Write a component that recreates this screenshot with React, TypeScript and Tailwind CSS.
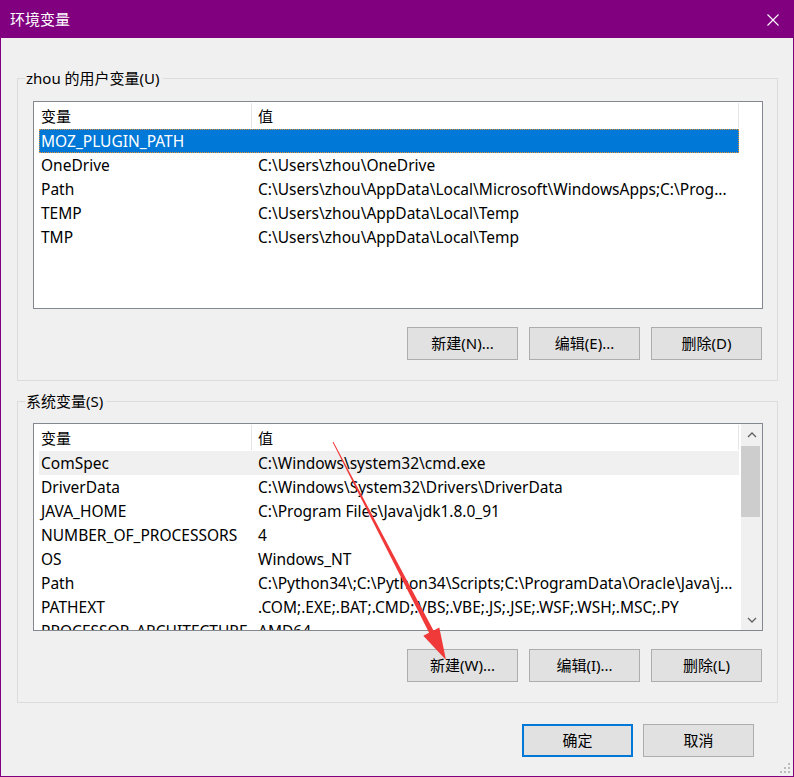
import React from "react";

type Row = [string, string];

const userVars: Row[] = [
  ["MOZ_PLUGIN_PATH", ""],
  ["OneDrive", "C:\\Users\\zhou\\OneDrive"],
  ["Path", "C:\\Users\\zhou\\AppData\\Local\\Microsoft\\WindowsApps;C:\\Prog..."],
  ["TEMP", "C:\\Users\\zhou\\AppData\\Local\\Temp"],
  ["TMP", "C:\\Users\\zhou\\AppData\\Local\\Temp"],
];

const sysVars: Row[] = [
  ["ComSpec", "C:\\Windows\\system32\\cmd.exe"],
  ["DriverData", "C:\\Windows\\System32\\Drivers\\DriverData"],
  ["JAVA_HOME", "C:\\Program Files\\Java\\jdk1.8.0_91"],
  ["NUMBER_OF_PROCESSORS", "4"],
  ["OS", "Windows_NT"],
  ["Path", "C:\\Python34\\;C:\\Python34\\Scripts;C:\\ProgramData\\Oracle\\Java\\j..."],
  ["PATHEXT", ".COM;.EXE;.BAT;.CMD;.VBS;.VBE;.JS;.JSE;.WSF;.WSH;.MSC;.PY"],
  ["PROCESSOR_ARCHITECTURE", "AMD64"],
];

function Button({ label, primary }: { label: string; primary?: boolean }) {
  return (
    <button
      className={
        "w-[111px] h-[33px] bg-[#e1e1e1] text-black text-[15px] leading-none flex items-center justify-center " +
        (primary ? "border-2 border-[#0078d7]" : "border border-[#adadad]")
      }
    >
      {label}
    </button>
  );
}

function VarList({
  rows,
  selected,
  hot,
  scroll,
}: {
  rows: Row[];
  selected?: number;
  hot?: number;
  scroll?: boolean;
}) {
  return (
    <div className="w-[730px] h-[208px] border border-[#828790] bg-white flex overflow-hidden">
      <div className="ml-[5px] w-[700px] flex flex-col">
        {/* header */}
        <div className="h-[27px] flex items-center shrink-0 text-black">
          <div className="w-[213px] h-[25px] pl-[2px] pt-[1px] flex items-center border-r border-[#e5e5e5]">变量</div>
          <div className="flex-1 h-[25px] pl-[6px] pt-[1px] flex items-center border-r border-[#e5e5e5]">值</div>
        </div>
        {rows.map(([name, value], i) => {
          const isSel = i === selected;
          const isHot = i === hot;
          return (
            <div
              key={name}
              className={
                "h-[24px] pt-[2px] shrink-0 flex items-center whitespace-nowrap text-[15.5px] " +
                (isSel
                  ? "bg-[#0078d7] text-white outline outline-1 outline-dotted outline-[#e4923a] -outline-offset-1"
                  : isHot
                  ? "bg-[#f0f0f0] text-black"
                  : "text-black")
              }
            >
              <div className="w-[213px] pl-[2px] overflow-hidden">{name}</div>
              <div className="flex-1 pl-[6px] overflow-hidden">{value}</div>
            </div>
          );
        })}
      </div>
      {scroll && (
        <div className="ml-auto w-[21px] bg-[#f0f0f0] flex flex-col">
          <div className="h-[21px] flex items-center justify-center">
            <svg width="10" height="6" viewBox="0 0 10 6">
              <polyline points="1,5 5,1 9,5" fill="none" stroke="#606060" strokeWidth="1.3" />
            </svg>
          </div>
          <div className="w-[19px] h-[71px] bg-[#cdcdcd] mt-[1px]" />
          <div className="mt-auto h-[21px] flex items-center justify-center">
            <svg width="10" height="6" viewBox="0 0 10 6">
              <polyline points="1,1 5,5 9,1" fill="none" stroke="#606060" strokeWidth="1.3" />
            </svg>
          </div>
        </div>
      )}
    </div>
  );
}

function Group({
  title,
  children,
  top,
}: {
  title: string;
  children: React.ReactNode;
  top: string;
}) {
  return (
    <div className={"w-[761px] border border-[#dcdcdc] px-[15px] pb-[20px] " + top}>
      <div className="-mt-[11px] -ml-[8px] w-fit h-[20px] leading-[20px] bg-[#f0f0f0] pl-[1px] pr-[3px] text-black">
        {title}
      </div>
      {children}
    </div>
  );
}

export default function App() {
  return (
    <div className="relative w-[794px] h-[777px] border border-[#800080] bg-[#f0f0f0] flex flex-col text-[15px] font-['Noto_Sans','Noto_Sans_CJK_SC',sans-serif] overflow-hidden">
      {/* title bar */}
      <div className="h-[37px] bg-[#800080] flex items-center pl-[9px] text-white shrink-0">
        <span>环境变量</span>
        <svg className="ml-auto mr-[14px]" width="12" height="12" viewBox="0 0 12 12">
          <path d="M0.5 0.5 L11.5 11.5 M11.5 0.5 L0.5 11.5" stroke="#ffffff" strokeWidth="1.1" />
        </svg>
      </div>

      <div className="pl-[16px] pr-[15px] pt-[40px] flex flex-col">
        <Group title="zhou 的用户变量(U)" top="">
          <div className="mt-[13px]">
            <VarList rows={userVars} selected={0} />
          </div>
          <div className="mt-[18px] flex justify-end gap-[11px]">
            <Button label="新建(N)..." />
            <Button label="编辑(E)..." />
            <Button label="删除(D)" />
          </div>
        </Group>

        <Group title="系统变量(S)" top="mt-[20px]">
          <div className="mt-[12px]">
            <VarList rows={sysVars} hot={0} scroll />
          </div>
          <div className="mt-[18px] flex justify-end gap-[11px]">
            <Button label="新建(W)..." />
            <Button label="编辑(I)..." />
            <Button label="删除(L)" />
          </div>
        </Group>

        <div className="mt-[21px] flex justify-end gap-[10px] pr-[24px]">
          <Button label="确定" primary />
          <Button label="取消" />
        </div>
      </div>

      {/* size grip */}
      <svg className="absolute right-[2px] bottom-[2px]" width="12" height="12" viewBox="0 0 12 12">
        <rect x="9" y="1" width="2" height="2" fill="#bcbcbc" />
        <rect x="5" y="5" width="2" height="2" fill="#bcbcbc" />
        <rect x="9" y="5" width="2" height="2" fill="#bcbcbc" />
        <rect x="1" y="9" width="2" height="2" fill="#bcbcbc" />
        <rect x="5" y="9" width="2" height="2" fill="#bcbcbc" />
        <rect x="9" y="9" width="2" height="2" fill="#bcbcbc" />
      </svg>

      {/* red annotation arrow */}
      <svg className="absolute left-0 top-0 pointer-events-none" width="794" height="777" viewBox="-1 -1 794 777">
        <polygon
          points="330.6,440.2 331.4,439.8 431.5,628.5 437.3,625.5 444,658 421.3,633.7 427.1,630.8"
          fill="#f03a3a"
        />
      </svg>
    </div>
  );
}
